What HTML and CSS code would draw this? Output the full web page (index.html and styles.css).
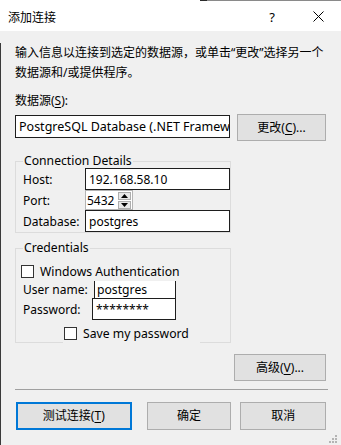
FILE: index.html
```html
<!DOCTYPE html>
<html lang="zh-CN">
<head>
<meta charset="utf-8">
<title>添加连接</title>
<link rel="stylesheet" href="styles.css">
</head>
<body>
<div class="window">
  <div class="topline"></div>
  <header class="titlebar">
    <span class="title">添加连接</span>
    <span class="help">?</span>
    <span class="close"><svg width="11" height="11" viewBox="0 0 11 11"><path d="M0.5 0.5 L10.5 10.5 M10.5 0.5 L0.5 10.5" stroke="#000" stroke-width="1" fill="none"/></svg></span>
  </header>
  <main class="content">
    <p class="intro">输入信息以连接到选定的数据源，或单击“更改”选择另一个<br>数据源和/或提供程序。</p>
    <div class="label">数据源(<u>S</u>):</div>
    <div class="source-row">
      <div class="textbox source">PostgreSQL Database (.NET Framework Data Provider)</div>
      <button class="btn change">更改(<u>C</u>)...</button>
    </div>

    <fieldset class="group conn">
      <legend>Connection Details</legend>
      <div class="conn-grid">
        <span class="flabel">Host:</span>
        <div class="textbox field">192.168.58.10</div>
        <span class="flabel">Port:</span>
        <div class="spin">
          <span class="spin-val">5432</span>
          <span class="spin-btns">
            <span class="spin-btn"><svg width="7" height="4" viewBox="0 0 7 4"><path d="M3.5 0 L7 4 L0 4 Z" fill="#000"/></svg></span>
            <span class="spin-btn"><svg width="7" height="4" viewBox="0 0 7 4"><path d="M0 0 L7 0 L3.5 4 Z" fill="#000"/></svg></span>
          </span>
        </div>
        <span class="flabel">Database:</span>
        <div class="textbox field">postgres</div>
      </div>
    </fieldset>

    <fieldset class="group cred">
      <legend>Credentials</legend>
      <div class="check-row winauth"><span class="checkbox"></span><span>Windows Authentication</span></div>
      <div class="cred-row user"><span class="flabel clabel">User name:</span><div class="textbox username">postgres</div></div>
      <div class="cred-row pass"><span class="flabel clabel">Password:</span><div class="textbox password">********</div></div>
      <div class="check-row save"><span class="checkbox"></span><span>Save my password</span></div>
    </fieldset>

    <div class="adv-row"><button class="btn adv">高级(<u>V</u>)...</button></div>
    <div class="separator"></div>
    <div class="button-row">
      <button class="btn test">测试连接(<u>T</u>)</button>
      <button class="btn ok">确定</button>
      <button class="btn cancel">取消</button>
    </div>
  </main>
  <svg class="grip" width="9" height="9" viewBox="0 0 9 9">
    <rect x="6" y="0" width="2" height="2" fill="#b4b4b4"/>
    <rect x="3" y="3" width="2" height="2" fill="#b4b4b4"/>
    <rect x="6" y="3" width="2" height="2" fill="#b4b4b4"/>
    <rect x="0" y="6" width="2" height="2" fill="#b4b4b4"/>
    <rect x="3" y="6" width="2" height="2" fill="#b4b4b4"/>
    <rect x="6" y="6" width="2" height="2" fill="#b4b4b4"/>
  </svg>
</div>
</body>
</html>
```

FILE: styles.css
```css
* { box-sizing: border-box; }
html, body { margin: 0; padding: 0; }
body {
  background: #f0f0f0;
  font-family: "Noto Sans", "Noto Sans CJK SC", sans-serif;
  font-size: 12px;
  color: #000;
}
.window {
  position: relative;
  width: 341px;
  height: 445px;
  overflow: hidden;
  background: #f0f0f0;
}
.topline {
  height: 1px;
  background: linear-gradient(to right, #fff 0, #fff 200px, #2b2b2b 200px, #2b2b2b 207px, #8a8a8a 207px);
}
.titlebar {
  height: 30px;
  background: #fff;
  display: flex;
  align-items: center;
  padding-left: 8px;
}
.title {
  font-family: "Noto Sans CJK SC", sans-serif;
  font-size: 12px;
  flex: 1;
}
.help {
  font-size: 13px;
  width: 46px;
  text-align: center;
  margin-top: 1px;
}
.close {
  width: 46px;
  height: 30px;
  display: flex;
  align-items: center;
  justify-content: center;
  margin-top: 1px;
}
.content {
  height: 414px;
  border-left: 1px solid #3a3a3a;
  padding: 0 15px 0 14px;
}
.intro {
  margin: 12px 0 0;
  line-height: 20px;
}
.label {
  margin-top: 8px;
  line-height: 20px;
}
u { text-decoration: underline; text-underline-offset: 2px; }
.source-row {
  margin-top: 3px;
  display: flex;
  align-items: flex-start;
  gap: 7px;
  height: 27px;
}
.textbox {
  background: #fff;
  border: 1px solid #1e1e1e;
  white-space: nowrap;
  overflow: hidden;
  display: flex;
  align-items: center;
}
.source {
  margin-top: 1px;
  width: 215px;
  height: 23px;
  padding-left: 3px;
  font-size: 12.5px;
}
.btn {
  font-family: "Noto Sans", "Noto Sans CJK SC", sans-serif;
  font-size: 12px;
  line-height: 16px;
  background: #e1e1e1;
  border: 1px solid #adadad;
  color: #000;
  padding: 0;
  margin: 0;
}
.change {
  width: 89px;
  height: 27px;
}
.group {
  margin: 13px 0 0 0;
  width: 216px;
  border: 1px solid #dcdcdc;
  padding: 0 0 0 7px;
}
.group legend {
  font-size: 12.2px;
  line-height: 14px;
  height: 14px;
  padding: 0 1px;
  margin-left: 0;
}
.conn-grid {
  display: grid;
  grid-template-columns: 62px 145px;
  grid-template-rows: 22px 20px 22px;
  align-items: center;
}
.flabel {
  font-size: 12px;
}
.field {
  height: 22px;
  padding-left: 3px;
  font-size: 12px;
}
.spin {
  width: 48px;
  height: 20px;
  border: 1px solid #b4b4b4;
  background: #fff;
  display: flex;
  align-items: center;
  font-size: 12px;
}
.spin-val { flex: 1; padding-left: 1px; }
.spin-btns {
  display: flex;
  flex-direction: column;
  gap: 1px;
  margin-right: 1px;
}
.spin-btn {
  width: 13px;
  height: 8px;
  background: #e8e8e8;
  border: 1px solid #adadad;
  display: flex;
  align-items: center;
  justify-content: center;
}
.cred { margin-top: 8px; }
.check-row {
  display: flex;
  align-items: center;
  font-size: 12.2px;
}
.checkbox {
  width: 13px;
  height: 13px;
  border: 1px solid #333;
  background: #fff;
  margin-right: 6px;
  flex: none;
}
.winauth {
  margin-top: 6px;
  height: 20px;
  margin-left: -2px;
}
.cred-row {
  display: flex;
  align-items: center;
}
.clabel { width: 71px; }
.user { height: 17px; }
.username {
  width: 82px;
  height: 17px;
  border-top: none;
  border-bottom: none;
  padding-left: 2px;
  font-size: 12.2px;
}
.pass { height: 22px; }
.password {
  width: 84px;
  height: 22px;
  margin-left: -2px;
  padding-left: 3px;
  font-size: 12px;
  align-items: flex-start;
  padding-top: 2px;
}
.save {
  width: 137px;
  height: 23px;
  margin-bottom: -1px;
  margin-left: 40px;
  padding-left: 1px;
  padding-top: 3px;
  background: #f0f0f0;
}
.adv-row {
  margin-top: 11px;
  display: flex;
  justify-content: flex-end;
}
.adv {
  width: 92px;
  height: 27px;
}
.separator {
  margin-top: 8px;
  margin-right: -2px;
  height: 1px;
  background: #a0a0a0;
}
.button-row {
  margin-top: 12px;
  display: flex;
  height: 28px;
}
.test {
  width: 116px;
  height: 28px;
  margin-left: 1px;
  border: 2px solid #0078d7;
}
.ok {
  width: 85px;
  height: 28px;
  margin-left: 15px;
}
.cancel {
  width: 86px;
  height: 28px;
  margin-left: 9px;
}
.grip {
  position: absolute;
  right: 3px;
  bottom: 1px;
}
```
